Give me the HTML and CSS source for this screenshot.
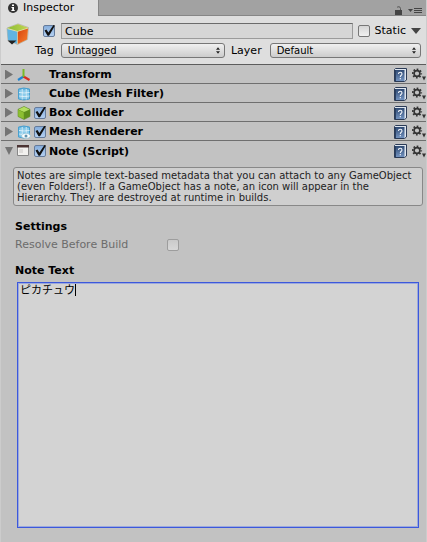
FILE: index.html
```html
<!DOCTYPE html>
<html lang="en">
<head>
    <meta charset="UTF-8">
    <meta name="viewport" content="width=device-width, initial-scale=1.0">
    <title>Inspector</title>
    <link rel="stylesheet" href="styles.css">
</head>
<body>
    <!-- shared icons -->
    <svg class="defs" width="0" height="0">
        <defs>
            <linearGradient id="book-fill" x1="0" y1="0" x2="0" y2="1">
                <stop offset="0" stop-color="#2f4a73"/>
                <stop offset="1" stop-color="#7393c0"/>
            </linearGradient>
            <symbol id="icon-help" viewBox="0 0 13 14">
                <path d="M1.500.5h11v11.500l-2 1.500h-10v-12z" fill="#dfe6ef" stroke="#2b3b56"/>
                <path d="M1 2h9.500v11H1z" fill="url(#book-fill)"/>
                <path d="M1.500 2v11" stroke="#2a4164"/>
                <path d="M4.500 6c0-2.300 3.500-2.300 3.500 0 0 1.300-1.700 1.300-1.700 2.900M6.300 10v1.200" fill="none" stroke="#f4f7fb" stroke-width="1.100"/>
            </symbol>
            <symbol id="icon-gear" viewBox="0 0 14 13">
                <circle cx="5" cy="5.500" r="4.200" fill="none" stroke="#333" stroke-width="1.800" stroke-dasharray="1.650 1.649" stroke-dashoffset=".8"/>
                <circle cx="5" cy="5.500" r="2.900" fill="none" stroke="#333" stroke-width="1.600"/>
                <path d="M10 8.500h4l-2 4z" fill="#333"/>
            </symbol>
            <symbol id="icon-updown" viewBox="0 0 5 8">
                <path d="M2.500 0L5 3H0zM0 5h5L2.500 8z" fill="#222"/>
            </symbol>
            <symbol id="icon-mesh" viewBox="0 0 14 14">
                <path d="M1.500 2Q6.500 0 12.500 2v10Q6.500 14 1.500 12z" fill="#66b5df" stroke="#4a9fce"/>
                <path d="M2.500 3h2v2.300h-2zM6 3.300h2.500v2.300H6zM10 3h2v2.300h-2zM2.500 6.300h2v2.300h-2zM6 6.600h2.500v2.300H6zM10 6.300h2v2.300h-2zM2.500 9.600h2v2h-2zM6 9.900h2.500v2.100H6zM10 9.600h2v2h-2z" fill="#8accec"/>
                <path d="M5.200 2v10.500M9.200 2v10.500M2 5.500q5 1 10.500 0M2 9q5 1 10.500 0" fill="none" stroke="#e6f6fd" stroke-width=".9"/>
            </symbol>
        </defs>
    </svg>

    <div class="tab-bar">
        <button class="tab">
            <svg width="10" height="10" viewBox="0 0 10 10">
                <circle cx="5" cy="5" r="5" fill="#333"/>
                <path d="M4 1.500h2v1.500H4zM3.500 4H6v3h.7v1H3.400V7h.8V5h-.7z" fill="#fff"/>
            </svg>
            Inspector
        </button>
        <div class="tab-tools">
            <svg width="7" height="9" viewBox="0 0 7 9">
                <path d="M0 4h7v5H0z" fill="#444"/>
                <path d="M2 1.500C2.500.5 5.500.200 5.500 2.500V4" fill="none" stroke="#555"/>
            </svg>
            <svg width="14" height="7" viewBox="0 0 14 7">
                <path d="M0 2h5L2.500 5z" fill="#444"/>
                <path d="M6 1.500h8M6 3.500h8M6 5.500h8" stroke="#444"/>
            </svg>
        </div>
    </div>

    <div class="object-header">
        <svg class="cube" width="24" height="24" viewBox="0 0 24 24">
            <defs>
                <linearGradient id="cube-top" x1="0" y1="0" x2="1" y2="0">
                    <stop offset="0" stop-color="#8bbd35"/>
                    <stop offset="1" stop-color="#c3d551"/>
                </linearGradient>
                <linearGradient id="cube-side" x1="0" y1="0" x2="1" y2="1">
                    <stop offset="0" stop-color="#d8440d"/>
                    <stop offset="1" stop-color="#f7802d"/>
                </linearGradient>
            </defs>
            <path d="M1 5L12 .8 22.500 4.500 21.500 16.500 11.500 21.500 2 17z" fill="#e5dfaa" stroke="#999" stroke-width=".5"/>
            <path d="M1.500 5L12 1.200 22 4.700 11.500 8z" fill="url(#cube-top)"/>
            <path d="M1.200 6L11.200 8.800V21L2 17z" fill="#62b4e2"/>
            <path d="M11.800 8.800L22 5.500 21 16.500 11.800 21z" fill="url(#cube-side)"/>
            <path d="M1.500 17.500h9l-4.500 4z" fill="#222"/>
        </svg>
        <div class="object-fields">
            <div class="name-row">
                <input type="checkbox" class="check" aria-label="Active" checked>
                <input type="text" class="name-input" aria-label="Name" value="Cube">
                <input type="checkbox" class="check" id="static">
                <label for="static">Static</label>
                <button class="static-menu" aria-label="Static options">
                    <svg width="10" height="6" viewBox="0 0 10 6"><path d="M0 0h10L5 6z" fill="#444"/></svg>
                </button>
            </div>
            <div class="tag-row">
                <label for="tag">Tag</label>
                <div class="dropdown tag">
                    <select id="tag"><option>Untagged</option></select>
                    <svg width="4" height="7"><use href="#icon-updown"/></svg>
                </div>
                <label for="layer">Layer</label>
                <div class="dropdown layer">
                    <select id="layer"><option>Default</option></select>
                    <svg width="4" height="7"><use href="#icon-updown"/></svg>
                </div>
            </div>
        </div>
    </div>

    <div class="component">
        <button class="foldout" aria-label="Expand Transform"></button>
        <svg class="icon" width="14" height="14" viewBox="0 0 14 14">
            <path d="M6.500 8.500L1 12" stroke="#2284d0" stroke-width="2.200"/>
            <path d="M6.500 8.500l6 3.500" stroke="#d92b20" stroke-width="2.200"/>
            <path d="M6.500 1v8" stroke="#79bb27" stroke-width="2"/>
        </svg>
        <span class="slot"></span>
        <h2>Transform</h2>
        <button class="tool" aria-label="Help"><svg width="13" height="14"><use href="#icon-help"/></svg></button>
        <button class="tool" aria-label="Options"><svg width="14" height="13"><use href="#icon-gear"/></svg></button>
    </div>
    <div class="component">
        <button class="foldout" aria-label="Expand Mesh Filter"></button>
        <svg class="icon" width="14" height="14"><use href="#icon-mesh"/></svg>
        <span class="slot"></span>
        <h2>Cube (Mesh Filter)</h2>
        <button class="tool" aria-label="Help"><svg width="13" height="14"><use href="#icon-help"/></svg></button>
        <button class="tool" aria-label="Options"><svg width="14" height="13"><use href="#icon-gear"/></svg></button>
    </div>
    <div class="component">
        <button class="foldout" aria-label="Expand Box Collider"></button>
        <svg class="icon" width="14" height="14" viewBox="0 0 14 14">
            <path d="M7 .5l6 2.800v7.200l-6 3-6-3V3.300z" fill="#5f8f1c" stroke="#668f2d" stroke-width=".6"/>
            <path d="M7 .7l5.700 2.700L7 6 1.300 3.400z" fill="#b4df61"/>
            <path d="M1.200 3.800L6.800 6.400V13l-5.600-2.700z" fill="#8dbf32"/>
        </svg>
        <span class="slot"><input type="checkbox" class="check" aria-label="Box Collider enabled" checked></span>
        <h2>Box Collider</h2>
        <button class="tool" aria-label="Help"><svg width="13" height="14"><use href="#icon-help"/></svg></button>
        <button class="tool" aria-label="Options"><svg width="14" height="13"><use href="#icon-gear"/></svg></button>
    </div>
    <div class="component">
        <button class="foldout" aria-label="Expand Mesh Renderer"></button>
        <svg class="icon" width="14" height="14" viewBox="0 0 14 14">
            <use href="#icon-mesh" width="14" height="14"/>
            <path d="M4 11q5-5.500 10 0-5 5-10 0z" fill="#fff" stroke="#8abdd2" stroke-width=".6"/>
            <circle cx="9" cy="11" r="1.500" fill="#5f93ae"/>
        </svg>
        <span class="slot"><input type="checkbox" class="check" aria-label="Mesh Renderer enabled" checked></span>
        <h2>Mesh Renderer</h2>
        <button class="tool" aria-label="Help"><svg width="13" height="14"><use href="#icon-help"/></svg></button>
        <button class="tool" aria-label="Options"><svg width="14" height="13"><use href="#icon-gear"/></svg></button>
    </div>
    <div class="component">
        <button class="foldout open" aria-label="Collapse Note"></button>
        <svg class="icon" width="14" height="14" viewBox="0 0 14 14">
            <path d="M.5 1.500h11v10H.5z" fill="#f2f1ef" stroke="#888"/>
            <path d="M0 1h12v2.500H0z" fill="#4b3434"/>
            <path d="M2 5h4v4H2z" fill="#dedcda"/>
        </svg>
        <span class="slot"><input type="checkbox" class="check" aria-label="Note enabled" checked></span>
        <h2>Note (Script)</h2>
        <button class="tool" aria-label="Help"><svg width="13" height="14"><use href="#icon-help"/></svg></button>
        <button class="tool" aria-label="Options"><svg width="14" height="13"><use href="#icon-gear"/></svg></button>
    </div>

    <div class="note-body">
        <p class="help-box">Notes are simple text-based metadata that you can attach to any GameObject (even Folders!). If a GameObject has a note, an icon will appear in the Hierarchy. They are destroyed at runtime in builds.</p>
        <h3>Settings</h3>
        <div class="setting">
            <label for="resolve">Resolve Before Build</label>
            <input type="checkbox" class="check" id="resolve" disabled>
        </div>
        <h3><label for="note">Note Text</label></h3>
        <div class="note-field">
            <textarea id="note" spellcheck="false">ピカチュウ</textarea>
            <span class="caret"></span>
        </div>
    </div>
</body>
</html>
```
FILE: styles.css
```css
* {
    box-sizing: border-box;
}
body {
    margin: 0;
    min-height: 100vh;
    display: flex;
    flex-direction: column;
    background-color: #c2c2c2;
    border-left: 1px solid #cccccc;
    border-right: 1px solid #cccccc;
    color: #000;
    font-family: "DejaVu Sans", Verdana, sans-serif;
    font-size: 11px;
    line-height: 14px;
}
.defs {
    position: absolute;
}
svg {
    display: block;
    flex: none;
}
button {
    padding: 0;
    border: none;
    background: none;
    color: inherit;
    font: inherit;
}
h2, h3 {
    margin: 0;
    font-size: 11px;
    line-height: 14px;
}

/* Tab bar */
.tab-bar {
    display: flex;
    justify-content: space-between;
    height: 16px;
    background-color: #a2a2a2;
    border-bottom: 1px solid #868686;
}
.tab {
    display: flex;
    align-items: center;
    gap: 5px;
    width: 98px;
    height: 16px;
    padding-left: 7px;
    background-color: #dedede;
    border-right: 1px solid #858585;
}
.tab-tools {
    display: flex;
    align-items: center;
    gap: 6px;
    padding: 5px 4px 0 0;
}

/* Object header */
.object-header {
    display: flex;
    height: 49px;
    padding: 7px 5px 0;
    background-color: #dedede;
    border-bottom: 1px solid #5c5c5c;
}
.object-fields {
    flex: 1;
    padding-left: 5px;
}
.name-row {
    display: flex;
    align-items: center;
    height: 16px;
    padding-left: 8px;
}
.tag-row {
    display: flex;
    align-items: center;
    height: 15px;
    margin-top: 4px;
}
.name-input {
    flex: 1;
    min-width: 0;
    height: 16px;
    margin: 0 5px 0 6px;
    padding: 0 3px;
    border: 1px solid #9b9b9b;
    border-top-color: #6b6b6b;
    background-color: #d6d6d6;
    font: inherit;
}
.name-row label {
    margin-left: 5px;
}
.static-menu {
    margin-left: 5px;
}
.check {
    appearance: none;
    position: relative;
    flex: none;
    width: 12px;
    height: 12px;
    margin: 0;
    border: 1px solid #777;
    border-radius: 2px;
    background: linear-gradient(#d5d5d5, #f1f1f1);
}
.check:checked {
    border-color: #657b9b;
    background: linear-gradient(#86aedd, #b3cff0);
}
.check:checked::before {
    content: "";
    position: absolute;
    left: 0;
    top: -1px;
    width: 11px;
    height: 11px;
    background-color: #111;
    clip-path: polygon(5% 50%, 22% 42%, 40% 68%, 86% 0, 100% 4%, 46% 98%, 32% 98%);
}
.check:disabled {
    border-color: #9d9d9d;
    background: linear-gradient(#cacaca, #d8d8d8);
}
.dropdown {
    position: relative;
    min-width: 0;
}
.dropdown.tag {
    flex: 164;
    margin: 0 6px 0 7px;
}
.dropdown.layer {
    flex: 151;
    margin-left: 8px;
}
.dropdown select {
    appearance: none;
    display: block;
    width: 100%;
    height: 15px;
    padding: 0 12px 0 6px;
    border: 1px solid #777;
    border-radius: 3px;
    background: linear-gradient(#f0f0f0, #cccccc);
    color: #000;
    font: inherit;
    font-size: 10px;
    line-height: 13px;
}
.dropdown svg {
    position: absolute;
    right: 5px;
    top: 4px;
    pointer-events: none;
}

/* Components */
.component {
    display: flex;
    align-items: center;
    height: 19px;
    padding: 1px 0 0 4px;
    border-bottom: 1px solid #6f6f6f;
}
.component:nth-last-of-type(2) {
    border-bottom: none;
}
.component h2 {
    flex: 1;
    padding-top: 1px;
}
.foldout {
    width: 8px;
    height: 10px;
    background-color: #747474;
    clip-path: polygon(0 0, 100% 50%, 0 100%);
}
.foldout.open {
    clip-path: polygon(0 10%, 100% 10%, 50% 90%);
}
.icon {
    margin-left: 4px;
}
.slot {
    display: flex;
    width: 18px;
    padding-left: 3px;
}
.tool + .tool {
    margin-left: 5px;
}

/* Note component */
.note-body {
    flex: 1;
    display: flex;
    flex-direction: column;
    padding: 7px 7px 14px 14px;
}
.help-box {
    margin: 0 -4px 14px -2px;
    padding: 2px 6px 2px 3px;
    border: 1px solid #888;
    border-radius: 3px;
    background-color: #cfcfcf;
    color: #222;
    font-size: 10px;
    line-height: 11px;
}
.setting {
    display: flex;
    align-items: center;
    margin: 4px 0 12px;
    color: #6c6c6c;
}
.setting label {
    width: 152px;
}
.note-field {
    position: relative;
    flex: 1;
    display: flex;
    margin: 4px 0 0 2px;
}
textarea {
    flex: 1;
    padding: 1px 2px;
    border: 1px solid #3c58dc;
    outline: none;
    box-shadow: inset 0 0 0 1px #9ca9dc;
    background-color: #d3d3d3;
    color: #000;
    caret-color: transparent;
    resize: none;
    font: 11px/14px "DejaVu Sans", "Noto Sans CJK JP", sans-serif;
}
.caret {
    position: absolute;
    left: 58px;
    top: 2px;
    width: 1px;
    height: 12px;
    background-color: #000;
}
```
